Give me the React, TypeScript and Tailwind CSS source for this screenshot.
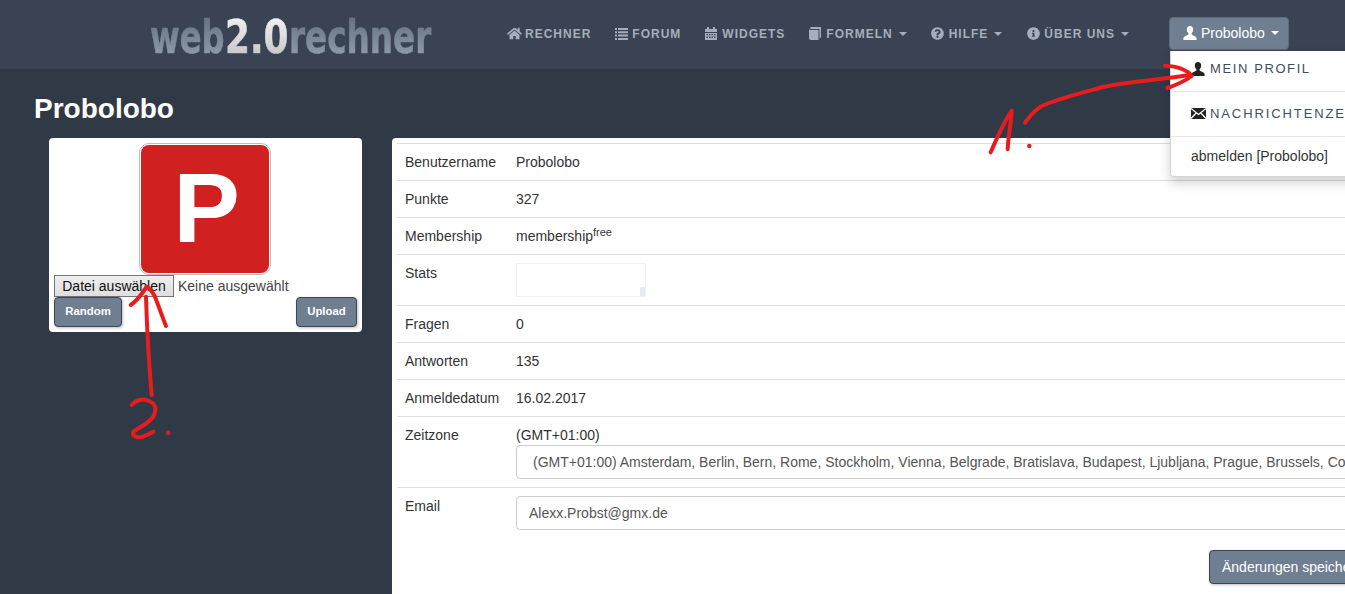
import React from "react";
import { FaHome, FaQuestionCircle, FaInfoCircle } from "react-icons/fa";

const Caret = () => <span className="inline-block w-0 h-0 border-x-4 border-t-4 border-x-transparent border-t-current ml-[6px] align-middle" />;

const UserIcon = ({ className }: { className?: string }) => (
  <svg width="14" height="14" viewBox="0 0 14 14" fill="currentColor" className={className}>
    <path d="M7 0C5 0 3.8 1.4 3.8 3.5c0 1.5.7 3 1.6 3.8v1.2C4 9.5 1 10 .4 12v2h13.2v-2c-.6-2-3.6-2.5-5-3.5V7.3c.9-.8 1.6-2.3 1.6-3.8C10.2 1.4 9 0 7 0z" />
  </svg>
);

const MailIcon = () => (
  <svg width="15" height="11" viewBox="0 0 15 11" className="mr-[4px]">
    <rect width="15" height="11" fill="#222222" />
    <path d="M0 0.5L7.5 6.5L15 0.5M0 10.5L5.4 4.8M15 10.5L9.6 4.8" fill="none" stroke="#ffffff" strokeWidth="1.3" />
  </svg>
);

const ListIcon = () => (
  <svg width="13" height="12" viewBox="0 0 13 12" fill="currentColor">
    <path d="M0 0h2v2H0zM3 0h10v2H3zM0 3.3h2v2H0zM3 3.3h10v2H3zM0 6.6h2v2H0zM3 6.6h10v2H3zM0 10h2v2H0zM3 10h10v2H3z" />
  </svg>
);

const CalendarIcon = () => (
  <svg width="12" height="13" viewBox="0 0 12 13" fill="currentColor">
    <path d="M2 0h2v2h4V0h2v2h2v3H0V2h2zM0 6h12v7H0zM1.5 7v1.3h1.5V7zM4 7v1.3h1.5V7zM6.5 7v1.3H8V7zM9 7v1.3h1.5V7zM1.5 9.6v1.3h1.5V9.6zM4 9.6v1.3h1.5V9.6zM6.5 9.6v1.3H8V9.6zM9 9.6v1.3h1.5V9.6z" fillRule="evenodd" />
  </svg>
);

const BookIcon = () => (
  <svg width="12" height="13" viewBox="0 0 12 13" fill="currentColor">
    <path d="M1.5 0H12v10.5l-1.5 1V2H2C1.2 2 1 1.5 1.5 0zM0 1.5C0 2.5.8 3 2 3h7.5v10H2c-1.2 0-2-.8-2-2z" />
  </svg>
);

const NavItem = ({ icon, label, caret, wide }: { icon: React.ReactNode; label: string; caret?: boolean; wide?: boolean }) => (
  <div className="flex items-center text-[12px] font-bold tracking-[1px] text-[#a5afbb] whitespace-nowrap">
    <span className={`flex items-center ${wide ? "w-[18px]" : "w-[17px]"}`}>{icon}</span>
    <span>{label}</span>
    {caret && <Caret />}
  </div>
);

const Row = ({ label, h, children }: { label: string; h: string; children: React.ReactNode }) => (
  <div className={`flex border-t border-[#dddddd] ${h}`}>
    <div className="w-[119px] shrink-0 pl-2 pt-[8px] leading-5">{label}</div>
    <div className="flex-1 min-w-0 pt-[8px] leading-5">{children}</div>
  </div>
);

const BLUE = "inline-block origin-left [-webkit-text-stroke:0.7px_transparent] bg-gradient-to-b from-[#65727f] to-[#8f9ca9] bg-clip-text text-transparent";

export default function App() {
  return (
    <div className="relative w-[1345px] h-[594px] overflow-hidden bg-[#303a47] text-[14px] text-[#333333] font-['Liberation_Sans',Arial,sans-serif]">
      <header className="flex items-center h-[69px] bg-[#394353]">
        <div className="w-[507px] pl-[150px] shrink-0">
          <div className="flex mt-[4px] h-[40px] font-['DejaVu_Sans',sans-serif] font-bold text-[46px] leading-[40px] whitespace-nowrap">
            <span className="w-[75px]"><span className={`${BLUE} scale-x-[0.7]`}>web</span></span>
            <span className="w-[64px]"><span className="inline-block origin-left scale-x-[0.78] [-webkit-text-stroke:0.7px_transparent] bg-gradient-to-b from-[#f2f2f2] to-[#c6c6c6] bg-clip-text text-transparent">2.0</span></span>
            <span className="w-[142px]"><span className={`${BLUE} scale-x-[0.71]`}>rechner</span></span>
          </div>
        </div>
        <nav className="flex items-center gap-[24px] mb-[2px]">
          <NavItem icon={<FaHome size={15} />} label="RECHNER" wide />
          <NavItem icon={<ListIcon />} label="FORUM" />
          <NavItem icon={<CalendarIcon />} label="WIDGETS" />
          <NavItem icon={<BookIcon />} label="FORMELN" caret />
          <NavItem icon={<FaQuestionCircle size={13} />} label="HILFE" caret wide />
          <div className="ml-[1px]">
            <NavItem icon={<FaInfoCircle size={13} />} label="ÜBER UNS" caret />
          </div>
        </nav>
        <div className="relative ml-[40px]">
          <button className="flex items-center h-[33px] w-[120px] mt-[-3px] pl-[13px] rounded-[4px] bg-[#6f7f91] border border-[#5d6b7c] text-white text-[14px]">
            <UserIcon className="mr-[4px]" />
            Probolobo
            <Caret />
          </button>
          <div className="absolute left-[1px] top-[31px] w-[260px] h-[126px] bg-white rounded-bl-[4px] border-l border-b border-[#d5d5d5] shadow-[0_6px_12px_rgba(0,0,0,0.18)] z-10">
            <div className="flex items-center h-[41px] pb-[3px] pl-[20px] text-[13px] tracking-[1.6px] text-[#3f4d60] border-b border-[#e5e5e5]">
              <UserIcon className="mr-[5px] text-[#222222]" />
              MEIN PROFIL
            </div>
            <div className="flex items-center h-[45px] pl-[20px] text-[13px] tracking-[1.9px] text-[#3f4d60] border-b border-[#e5e5e5] whitespace-nowrap">
              <MailIcon />
              NACHRICHTENZENTRUM
            </div>
            <div className="flex items-center h-[39px] pt-[1px] pl-[20px] text-[14px] text-[#333333] whitespace-nowrap">abmelden [Probolobo]</div>
          </div>
        </div>
      </header>

      <h1 className="ml-[34px] mt-[24px] h-[45px] text-[28px] leading-[32px] font-bold text-white">Probolobo</h1>

      <div className="flex items-start">
        <section className="w-[313px] ml-[49px] h-[194px] shrink-0 bg-white rounded-[4px] px-[5px] pt-[5px]">
          <div className="ml-[85px] w-[132px] h-[132px] rounded-[10px] border border-[#bbbbbb] bg-white p-[1px]">
            <div className="w-full h-full rounded-[8px] bg-[#d02020] flex items-center justify-center text-white font-bold text-[98px] leading-none">
              <span className="inline-block scale-x-[1.02] translate-x-[2px] -translate-y-[1px]">P</span>
            </div>
          </div>
          <div className="flex items-center h-[22px]">
            <button className="w-[120px] h-[22px] border border-[#767676] bg-gradient-to-b from-[#efefef] to-[#dedede] text-[14px] text-[#111111]">Datei auswählen</button>
            <span className="ml-[4px] text-[#444444]">Keine ausgewählt</span>
          </div>
          <div className="flex justify-between">
            <button className="w-[68px] h-[30px] rounded-[4px] bg-[#6f7f91] border border-[#3a4656] text-white text-[11.4px] font-bold shadow-[1px_1px_3px_rgba(0,0,0,0.25)]">Random</button>
            <button className="w-[61px] h-[30px] rounded-[4px] bg-[#6f7f91] border border-[#3a4656] text-white text-[11.4px] font-bold shadow-[1px_1px_3px_rgba(0,0,0,0.25)]">Upload</button>
          </div>
        </section>

        <section className="ml-[30px] w-[1100px] h-[500px] shrink-0 bg-white rounded-tl-[4px] pl-[5px] pt-[5px]">
          <Row label="Benutzername" h="h-[37px]">Probolobo</Row>
          <Row label="Punkte" h="h-[37px]">327</Row>
          <Row label="Membership" h="h-[37px]">membership<sup className="text-[11px]">free</sup></Row>
          <Row label="Stats" h="h-[51px]">
            <div className="relative w-[130px] h-[34px] border border-[#eef1f3]">
              <div className="absolute right-0 bottom-0 w-[5px] h-[9px] bg-[#e3ecf4]" />
            </div>
          </Row>
          <Row label="Fragen" h="h-[37px]">0</Row>
          <Row label="Antworten" h="h-[37px]">135</Row>
          <Row label="Anmeldedatum" h="h-[37px]">16.02.2017</Row>
          <Row label="Zeitzone" h="h-[71px]">
            <div>(GMT+01:00)</div>
            <div className="h-[34px] w-[900px] border border-[#cccccc] rounded-[4px] pl-[16px] flex items-center text-[#555555] whitespace-nowrap overflow-hidden">
              (GMT+01:00) Amsterdam, Berlin, Bern, Rome, Stockholm, Vienna, Belgrade, Bratislava, Budapest, Ljubljana, Prague, Brussels, Copenhagen, Madrid, Paris
            </div>
          </Row>
          <Row label="Email" h="h-[63px]">
            <div className="h-[34px] w-[900px] border border-[#cccccc] rounded-[4px] pl-[12px] flex items-center text-[#555555]">
              Alexx.Probst@gmx.de
            </div>
          </Row>
          <button className="ml-[812px] h-[34px] w-[165px] rounded-[4px] bg-[#6f7f91] border border-[#3a4656] text-white text-[14px] text-left pl-[12px] shadow-[1px_1px_3px_rgba(0,0,0,0.25)] whitespace-nowrap">
            Änderungen speichern
          </button>
        </section>
      </div>

      <svg className="absolute inset-0 pointer-events-none z-20" width="1345" height="594" fill="none" stroke="#e81c1c" strokeWidth="4" strokeLinecap="round" strokeLinejoin="round">
        <path d="M1025 122.7C1030 116 1034 110 1042 106C1060 98 1085 92 1103 87C1130 81 1160 80 1190 75" />
        <path d="M1165 65.7C1172 66 1178 67 1182 69C1187 71 1190 73 1191.7 76C1185 81 1176 85 1167.3 88" />
        <path d="M990.7 152.3C996 140 1004 122 1011.7 110.7C1011 124 1008 138 1007.7 149.3" />
        <circle cx="1029.3" cy="146" r="2.2" fill="#e81c1c" stroke="none" />
        <path d="M151.7 395C149 365 147 330 146 296.7" />
        <path d="M130.7 305C137 301 142 294 146.7 286.7C151 289 153 293 155 296.7C159 307 162 316 166 326" />
        <path d="M131.7 405C136 400 143 398 149 401C156 404 157 409 153.3 416.7C148 424 138 428 133.3 431.7C131 436 138 438 142 437C147 435 151 433 153.3 431.7" />
        <circle cx="168.3" cy="432.7" r="2.2" fill="#e81c1c" stroke="none" />
      </svg>
    </div>
  );
}
